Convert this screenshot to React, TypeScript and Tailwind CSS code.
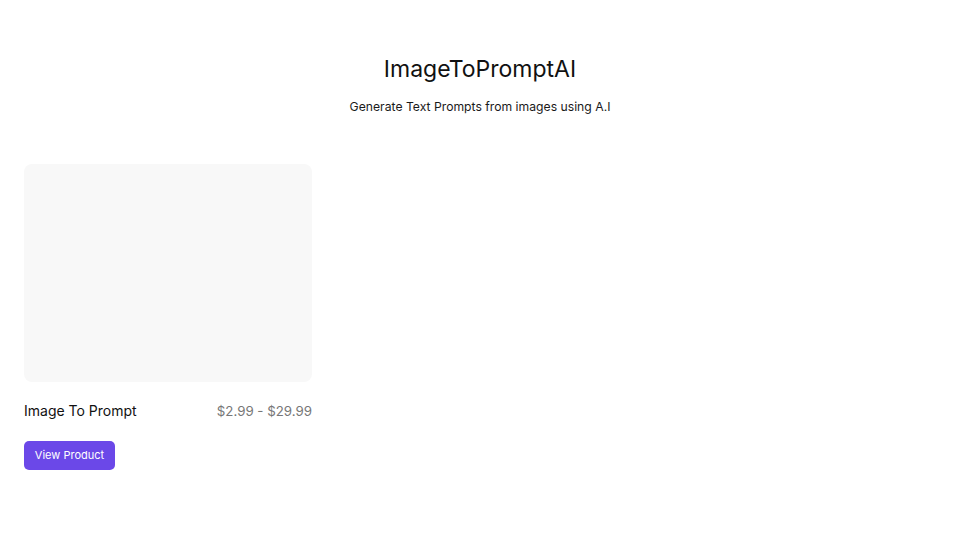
export default function App() {
  return (
    <div className="min-h-[540px] w-[960px] bg-white" style={{ fontFamily: "Inter, 'Noto Sans', sans-serif" }}>
      <div className="flex flex-col items-center pt-[55px]">
        <h1 className="text-[23px] leading-[28px] text-[#111] font-normal">ImageToPromptAI</h1>
        <p className="mt-[15px] text-[12.2px] leading-[18px] text-[#1a1a1a]">Generate Text Prompts from images using A.I</p>
      </div>
      <div className="mt-[48px] px-[24px]">
        <div className="w-[288px]">
          <div className="h-[218px] rounded-[8px] bg-[#f8f8f8]"></div>
          <div className="mt-[20px] flex items-center justify-between">
            <span className="text-[14px] leading-[18px] text-[#111]">Image To Prompt</span>
            <span className="text-[13.3px] leading-[18px] text-[#777]">$2.99 - $29.99</span>
          </div>
          <button className="mt-[21px] h-[29px] w-[91px] rounded-[5px] bg-[#6b48e8] text-[11px] text-white">View Product</button>
        </div>
      </div>
    </div>
  );
}
